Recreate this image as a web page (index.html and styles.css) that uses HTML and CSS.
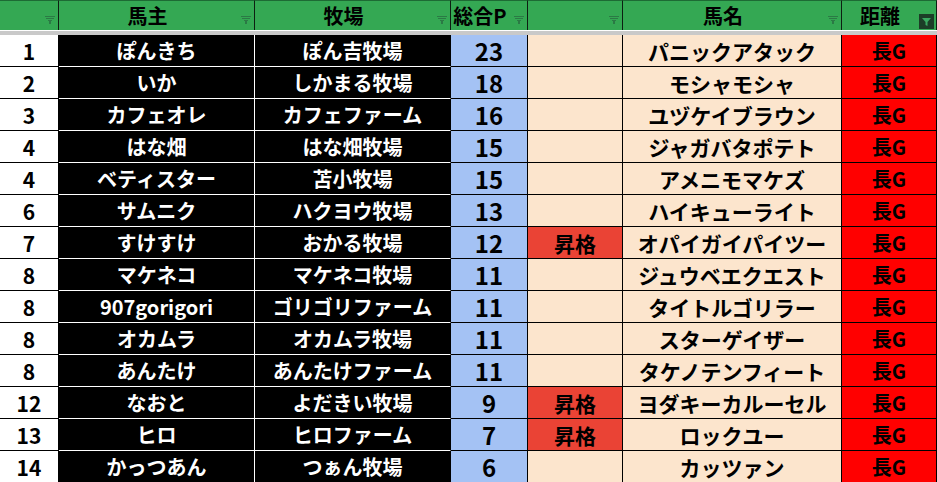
FILE: index.html
```html
<!DOCTYPE html>
<html lang="ja">
<head>
<meta charset="utf-8">
<title>Ranking</title>
<link rel="stylesheet" href="styles.css">
</head>
<body>
<div class="sheet">
  <div class="hd"><span class="hd-t"></span><svg class="flt" width="11" height="9" viewBox="0 0 11 9"><rect x="0" y="0" width="10" height="1"/><rect x="1" y="2" width="8" height="1"/><rect x="3" y="4" width="4" height="1"/><rect x="4" y="5" width="2" height="3"/></svg></div>
  <div class="hd"><span class="hd-t">馬主</span><svg class="flt" width="11" height="9" viewBox="0 0 11 9"><rect x="0" y="0" width="10" height="1"/><rect x="1" y="2" width="8" height="1"/><rect x="3" y="4" width="4" height="1"/><rect x="4" y="5" width="2" height="3"/></svg></div>
  <div class="hd"><span class="hd-t">牧場</span><svg class="flt" width="11" height="9" viewBox="0 0 11 9"><rect x="0" y="0" width="10" height="1"/><rect x="1" y="2" width="8" height="1"/><rect x="3" y="4" width="4" height="1"/><rect x="4" y="5" width="2" height="3"/></svg></div>
  <div class="hd"><span class="hd-t">総合P</span><svg class="flt" width="11" height="9" viewBox="0 0 11 9"><rect x="0" y="0" width="10" height="1"/><rect x="1" y="2" width="8" height="1"/><rect x="3" y="4" width="4" height="1"/><rect x="4" y="5" width="2" height="3"/></svg></div>
  <div class="hd"><span class="hd-t"></span><svg class="flt" width="11" height="9" viewBox="0 0 11 9"><rect x="0" y="0" width="10" height="1"/><rect x="1" y="2" width="8" height="1"/><rect x="3" y="4" width="4" height="1"/><rect x="4" y="5" width="2" height="3"/></svg></div>
  <div class="hd"><span class="hd-t">馬名</span><svg class="flt" width="11" height="9" viewBox="0 0 11 9"><rect x="0" y="0" width="10" height="1"/><rect x="1" y="2" width="8" height="1"/><rect x="3" y="4" width="4" height="1"/><rect x="4" y="5" width="2" height="3"/></svg></div>
  <div class="hd"><span class="hd-t">距離</span><span class="flt-on"><svg width="15" height="15" viewBox="0 0 15 15"><path d="M3 4h9l-3.5 4v4l-2 -1v-3z"/></svg></span></div>

  <div class="sep"></div>

  <div class="c num">1</div><div class="c blk">ぽんきち</div><div class="c blk">ぽん吉牧場</div><div class="c pts">23</div><div class="c up"></div><div class="c horse">パニックアタック</div><div class="c dist">長G</div>
  <div class="c num">2</div><div class="c blk">いか</div><div class="c blk">しかまる牧場</div><div class="c pts">18</div><div class="c up"></div><div class="c horse">モシャモシャ</div><div class="c dist">長G</div>
  <div class="c num">3</div><div class="c blk">カフェオレ</div><div class="c blk">カフェファーム</div><div class="c pts">16</div><div class="c up"></div><div class="c horse">ユヅケイブラウン</div><div class="c dist">長G</div>
  <div class="c num">4</div><div class="c blk">はな畑</div><div class="c blk">はな畑牧場</div><div class="c pts">15</div><div class="c up"></div><div class="c horse">ジャガバタポテト</div><div class="c dist">長G</div>
  <div class="c num">4</div><div class="c blk">ベティスター</div><div class="c blk">苫小牧場</div><div class="c pts">15</div><div class="c up"></div><div class="c horse">アメニモマケズ</div><div class="c dist">長G</div>
  <div class="c num">6</div><div class="c blk">サムニク</div><div class="c blk">ハクヨウ牧場</div><div class="c pts">13</div><div class="c up"></div><div class="c horse">ハイキューライト</div><div class="c dist">長G</div>
  <div class="c num">7</div><div class="c blk">すけすけ</div><div class="c blk">おかる牧場</div><div class="c pts">12</div><div class="c up on">昇格</div><div class="c horse">オパイガイパイツー</div><div class="c dist">長G</div>
  <div class="c num">8</div><div class="c blk">マケネコ</div><div class="c blk">マケネコ牧場</div><div class="c pts">11</div><div class="c up"></div><div class="c horse">ジュウベエクエスト</div><div class="c dist">長G</div>
  <div class="c num">8</div><div class="c blk">907gorigori</div><div class="c blk">ゴリゴリファーム</div><div class="c pts">11</div><div class="c up"></div><div class="c horse">タイトルゴリラー</div><div class="c dist">長G</div>
  <div class="c num">8</div><div class="c blk">オカムラ</div><div class="c blk">オカムラ牧場</div><div class="c pts">11</div><div class="c up"></div><div class="c horse">スターゲイザー</div><div class="c dist">長G</div>
  <div class="c num">8</div><div class="c blk">あんたけ</div><div class="c blk">あんたけファーム</div><div class="c pts">11</div><div class="c up"></div><div class="c horse">タケノテンフィート</div><div class="c dist">長G</div>
  <div class="c num">12</div><div class="c blk">なおと</div><div class="c blk">よだきい牧場</div><div class="c pts">9</div><div class="c up on">昇格</div><div class="c horse">ヨダキーカルーセル</div><div class="c dist">長G</div>
  <div class="c num">13</div><div class="c blk">ヒロ</div><div class="c blk">ヒロファーム</div><div class="c pts">7</div><div class="c up on">昇格</div><div class="c horse">ロックユー</div><div class="c dist">長G</div>
  <div class="c num">14</div><div class="c blk">かっつあん</div><div class="c blk">つぁん牧場</div><div class="c pts">6</div><div class="c up"></div><div class="c horse">カッツァン</div><div class="c dist">長G</div>
</div>
</body>
</html>
```
FILE: styles.css
```css
html, body {
  margin: 0;
  padding: 0;
  background: #ffffff;
}

.sheet {
  display: grid;
  grid-template-columns: 59px 196px 196px 77px 95px 219px 95px;
  grid-template-rows: 30px 5px;
  grid-auto-rows: 32px;
  width: 937px;
  font-family: "Noto Sans CJK JP", "Noto Sans", sans-serif;
  font-weight: 700;
  color: #000;
}

.hd {
  box-sizing: border-box;
  background: #34a853;
  border-top: 1px solid #1d6b34;
  border-right: 1px solid #0d1f12;
  display: flex;
  align-items: stretch;
}

.hd-t {
  flex: 1;
  display: flex;
  align-items: center;
  justify-content: center;
  font-size: 20px;
  line-height: 1;
  padding-top: 1px;
}

.flt {
  width: 18px;
  flex: none;
  align-self: flex-end;
  margin-bottom: 5px;
  fill: #2b7a45;
  padding-left: 3px;
  box-sizing: border-box;
}

.flt-on {
  flex: none;
  align-self: flex-end;
  width: 15px;
  height: 15px;
  margin: 0 2px 1px 1px;
  background: #1c3d27;
  display: flex;
}

.flt-on svg {
  fill: #3aa860;
}

.sep {
  grid-column: 1 / -1;
  box-sizing: border-box;
  border-top: 1px solid #ffffff;
  background: #c9c9c9;
}

.c {
  box-sizing: border-box;
  display: flex;
  align-items: center;
  justify-content: center;
  border-right: 1px solid #000;
  border-bottom: 1px solid #000;
  line-height: 1;
  white-space: nowrap;
  font-size: 20px;
  padding-top: 1px;
}

.num {
  background: #fff;
  font-size: 21px;
}

.blk {
  background: #000;
  color: #fff;
  border-right-color: #fff;
  border-bottom-color: #fff;
}

.blk + .blk {
  border-right-color: #000;
}

.pts {
  background: #a4c2f4;
  font-size: 24px;
}

.up {
  background: #fce5cd;
  font-size: 21px;
}

.up.on {
  background: #ea4335;
}

.horse {
  background: #fce5cd;
  font-size: 21px;
}

.dist {
  background: #ff0000;
  font-size: 20px;
}
```
